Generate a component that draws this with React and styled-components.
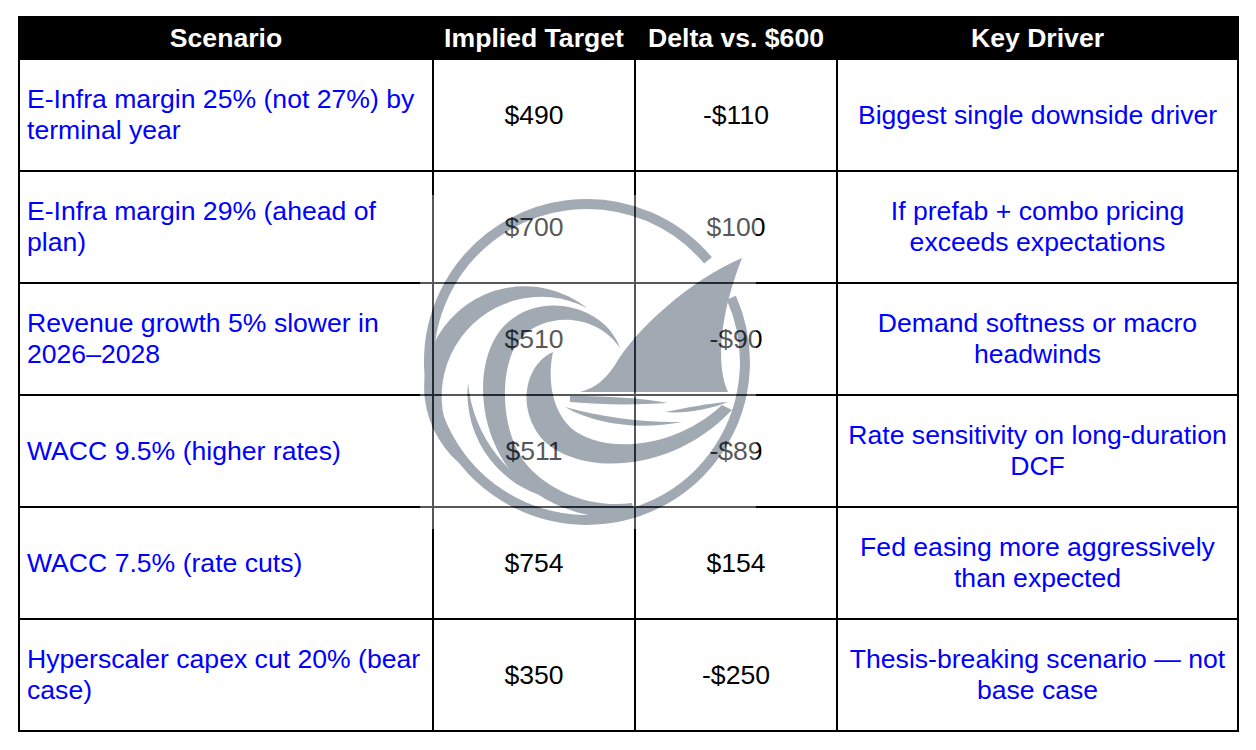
import React from 'react';
import styled, { createGlobalStyle } from 'styled-components';

const GlobalStyle = createGlobalStyle`
  html, body {
    margin: 0;
    background: #ffffff;
  }
  body {
    font-family: "Liberation Sans", Arial, Helvetica, sans-serif;
  }
`;

const Page = styled.div`
  padding: 16px 0 0 18px;
`;

const Frame = styled.div`
  position: relative;
  display: inline-block;
`;

const Table = styled.table`
  border-collapse: collapse;
  table-layout: fixed;
  width: 1221px;
  font-size: 26.6px;
  line-height: 31px;
`;

const HeadCell = styled.th`
  height: 40px;
  padding: 0;
  background: #000000;
  color: #ffffff;
  font-weight: bold;
  text-align: center;
  border: 2px solid #000000;
  white-space: nowrap;
`;

const Cell = styled.td`
  height: 110px;
  padding: 0 7px;
  border: 2px solid #000000;
  vertical-align: middle;
  text-align: ${(p) => (p.$left ? 'left' : 'center')};
  color: ${(p) => (p.$blue ? '#0000ff' : '#000000')};
`;

// the logo sits over the middle of the table as a faded watermark
const Watermark = styled.svg`
  position: absolute;
  left: 402px;
  top: 179px;
  width: 336px;
  height: 334px;
  pointer-events: none;
`;

const rows = [
  ['E-Infra margin 25% (not 27%) by terminal year', '$490', '-$110', 'Biggest single downside driver'],
  ['E-Infra margin 29% (ahead of plan)', '$700', '$100', 'If prefab + combo pricing exceeds expectations'],
  ['Revenue growth 5% slower in 2026–2028', '$510', '-$90', 'Demand softness or macro headwinds'],
  ['WACC 9.5% (higher rates)', '$511', '-$89', 'Rate sensitivity on long-duration DCF'],
  ['WACC 7.5% (rate cuts)', '$754', '$154', 'Fed easing more aggressively than expected'],
  ['Hyperscaler capex cut 20% (bear case)', '$350', '-$250', 'Thesis-breaking scenario — not base case'],
];

const LogoMark = () => (
  <Watermark viewBox="0 0 336 334">
    <defs>
      <g id="logo-shapes">
        <path d="M 311.3 102.7 A 158 158 0 1 1 288 65.4" fill="none" strokeWidth="10" />
        <path stroke="none" d="M 322 63 C 270 85 215 135 195 170 C 185 185 175 193 160 197 L 308 197 C 298 175 296 130 322 63 Z" />
        <path stroke="none" d="M 167 113 A 100.5 100.5 0 1 0 67 285 A 99.6 99.6 0 0 1 167 113 Z" />
        <path stroke="none" d="M 48 188 A 107.5 107.5 0 0 0 140 305 A 137 137 0 0 1 48 188 Z" />
        <path stroke="none" d="M 200 153 C 185 110 120 95 85 130 C 55 160 55 230 90 275 C 120 310 170 328 215 322 L 212 308 C 170 314 125 295 103 265 C 78 228 80 165 102 142 C 125 118 175 117 200 153 Z" />
        <path stroke="none" d="M 133 157 C 104 170 96 215 124 246 C 160 280 250 280 312 215 L 302 210 C 250 258 178 258 150 232 C 130 212 128 180 133 157 Z" />
        <path stroke="none" d="M 150 201 C 190 201 220 203 248 208 C 215 210 185 210 150 207 Z" />
        <path stroke="none" d="M 145 212 C 180 222 225 228 262 227 C 225 234 180 232 145 212 Z" />
        <path stroke="none" d="M 245 217 C 265 213 290 208 308 207 C 290 214 265 219 245 217 Z" />
      </g>
      <mask id="logo-cut">
        <rect width="336" height="334" fill="#ffffff" />
        <use href="#logo-shapes" fill="#000000" stroke="#000000" />
      </mask>
    </defs>
    <rect width="336" height="334" fill="rgba(255,255,255,0.34)" mask="url(#logo-cut)" />
    <use href="#logo-shapes" fill="rgb(70,85,105)" stroke="rgb(70,85,105)" opacity="0.5" />
  </Watermark>
);

export default function App() {
  return (
    <Page>
      <GlobalStyle />
      <Frame>
        <Table>
          <colgroup>
            <col style={{ width: 414 }} />
            <col style={{ width: 202 }} />
            <col style={{ width: 202 }} />
            <col style={{ width: 401 }} />
          </colgroup>
          <thead>
            <tr>
              <HeadCell>Scenario</HeadCell>
              <HeadCell>Implied Target</HeadCell>
              <HeadCell>Delta vs. $600</HeadCell>
              <HeadCell>Key Driver</HeadCell>
            </tr>
          </thead>
          <tbody>
            {rows.map(([scenario, target, delta, driver]) => (
              <tr key={scenario}>
                <Cell $left $blue>{scenario}</Cell>
                <Cell>{target}</Cell>
                <Cell>{delta}</Cell>
                <Cell $blue>{driver}</Cell>
              </tr>
            ))}
          </tbody>
        </Table>
        <LogoMark />
      </Frame>
    </Page>
  );
}
